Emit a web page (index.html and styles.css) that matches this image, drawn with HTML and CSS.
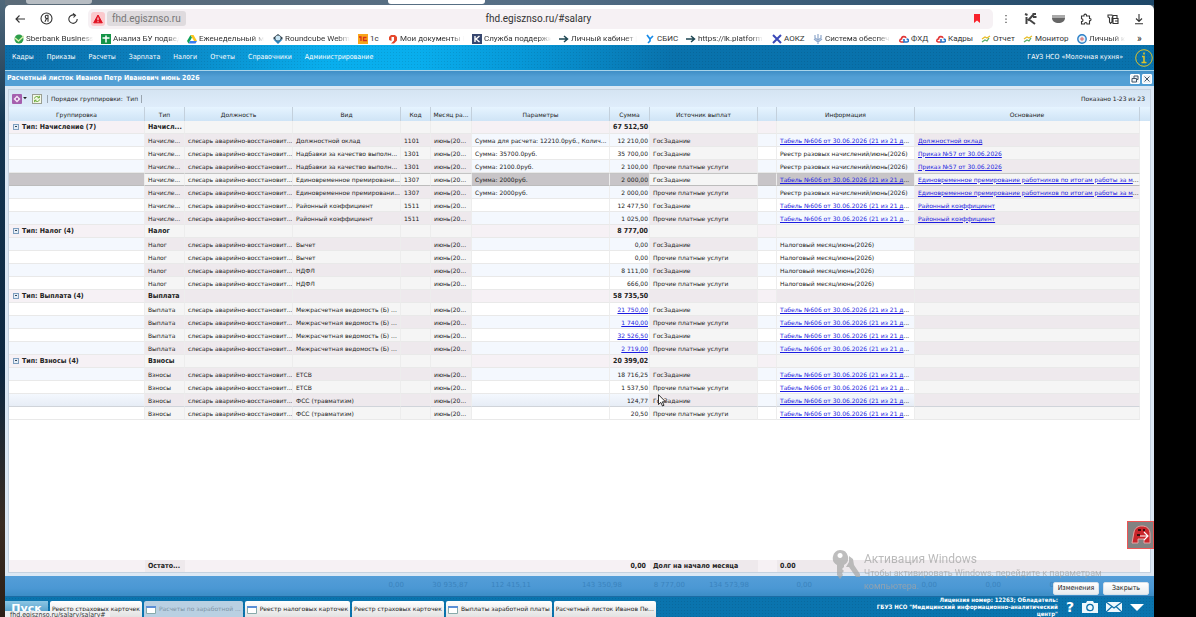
FILE: index.html
```html
<!DOCTYPE html>
<html lang="ru">
<head>
<meta charset="utf-8">
<title>Расчетный листок</title>
<link rel="stylesheet" href="styles.css">
</head>
<body>
<div class="tabs"><span class="tab tab-dim"></span><span class="tab tab-active"></span></div>
<div class="browser">
<header class="chrome">
<div class="address-row">
<button class="tool" aria-label="Назад"><svg width="12" height="12" viewBox="0 0 12 12"><path d="M11 6H2M5.500 2.500L2 6l3.500 3.500"/></svg></button>
<button class="tool" aria-label="Яндекс"><svg width="13" height="13" viewBox="0 0 13 13"><circle cx="6.500" cy="6.500" r="5.500"/><path d="M8 9.800V3.200H6.800C4.700 3.200 4.700 6.500 6.800 6.500H8M6.600 6.500L4.900 9.800"/></svg></button>
<button class="tool" aria-label="Обновить"><svg width="12" height="12" viewBox="0 0 12 12"><path d="M7.500 2.200A4.200 4.200 0 1 0 10.200 6M6 .5l2.500 1.800L6.500 4.500"/></svg></button>
<div class="address">
<span class="warn"><svg width="10" height="10" viewBox="0 0 10 10"><path d="M5 1L9.300 8.800H.7z" fill="#e01020" stroke="#e01020" stroke-linejoin="round"/><path d="M5 3.500v2.800M5 7.200v1" stroke="#fff"/></svg></span>
<span class="host">fhd.egisznso.ru</span>
<span class="url">fhd.egisznso.ru/#salary</span>
<svg class="mark" width="8" height="9" viewBox="0 0 8 9"><path d="M1 0h6v9L4 6.500 1 9z" fill="#f8232c"/></svg>
</div>
<div class="chrome-tools">
<button class="tool" aria-label="Меню"><svg width="6" height="12" viewBox="0 0 6 12"><path d="M3 2v1.300M3 5.400v1.300M3 8.800v1.300"/></svg></button>
<button class="tool" aria-label="Kaspersky"><svg width="13" height="13" viewBox="0 0 13 13"><path d="M2.500 5v7M4 8.500L10 2M5 7.500l6 4.500M9 5h3.500M1 2l2.500 1M8.500 2H12" stroke="#444" stroke-width="2"/></svg></button>
<button class="tool" aria-label="Защита"><svg width="13" height="10" viewBox="0 0 13 10"><path d="M0 1h13v3c0 3-3 5-6.500 5S0 7 0 4z" fill="#666" stroke="none"/><path d="M0 1h13v3H0z" fill="#aaa" stroke="none"/></svg></button>
<button class="tool" aria-label="Расширения"><svg width="12" height="12" viewBox="0 0 12 12"><path d="M1.500 3h2.500c-.5-2.500 3-2.500 2.500 0H9.500v2.500c2-.5 2 2.500 0 2.300V11H7c0-2-2.500-2-2.500 0h-3V8.500c2 0 2-2.700 0-2.700z"/></svg></button>
<button class="tool" aria-label="Пароли"><svg width="12" height="12" viewBox="0 0 12 12"><path d="M1 2h4l1 2-1 1v4l-1.500 1.500L2.500 9V5L1 4zM6 2.500h4V5M6 5.500h5v5H6zM8 8h3"/></svg></button>
<button class="tool" aria-label="Загрузки"><svg width="10" height="12" viewBox="0 0 10 12"><path d="M5 1v7M2 5.500l3 3 3-3M1 10.800h8"/></svg></button>
</div>
</div>
<nav class="bookmarks">
<a class="fade" href="#"><svg viewBox="0 0 10 10"><circle cx="5" cy="5" r="4.500" fill="#2e9e4a"/><path d="M1 4l3.500 3L10 2" stroke="#d6f0a8" stroke-width="1.500"/></svg><span>Sberbank Business</span></a>
<a class="fade" href="#"><svg viewBox="0 0 10 10"><path d="M0 0h10v10H0z" fill="#159447"/><path d="M5 1.500v7M1.500 4h7" stroke="#fff" stroke-width="1.500"/></svg><span>Анализ БУ подвед</span></a>
<a class="fade" href="#"><svg viewBox="0 0 10 10"><path d="M3.500 1L0 7l1.500 2.500L5 3.500z" fill="#10a25a"/><path d="M3.500 1h3L10 7H7z" fill="#fbc51d"/><path d="M10 7H3L1.500 9.500h7z" fill="#3a7df0"/></svg><span>Еженедельный м</span></a>
<a class="fade" href="#"><svg viewBox="0 0 10 10"><path d="M5 0l5 4-5 5-5-5z" fill="#31404c"/><circle cx="5" cy="4" r="2.600" fill="#c8e6f5"/><path d="M0 5l5 2 5-2-5 5z" fill="#2b80b8"/></svg><span>Roundcube Webm</span></a>
<a href="#"><svg viewBox="0 0 10 10"><path d="M0 0h10v10H0z" fill="#f9a51a"/><path d="M1 3h2v4M8.500 3.500H5.500v3H9" stroke="#d8301c" stroke-width="1.300"/></svg><span>1с</span></a>
<a class="fade" href="#"><svg viewBox="0 0 10 10"><path d="M3 1h4l2 2v3.500L6 9.500H3L6 6.500V3L3.500 3v4L1 6V3z" fill="#e5482c"/></svg><span>Мои документы Н</span></a>
<a class="fade" href="#"><svg viewBox="0 0 10 10"><path d="M0 0h10v10H0z" fill="#37476f"/><path d="M3 2v6M7.500 2L4 5l3.500 3" stroke="#fff" stroke-width="1.400"/></svg><span>Служба поддержк</span></a>
<a class="fade" href="#"><svg viewBox="0 0 10 10"><path d="M0 5h8M5 2l3.500 3L5 8" stroke="#1d4652" stroke-width="1.500"/></svg><span>Личный кабинет |</span></a>
<a href="#"><svg viewBox="0 0 10 10"><path d="M2 1l3 4M8 2L5 5v2L3 9" stroke="#178be8" stroke-width="1.700"/></svg><span>СБИС</span></a>
<a class="fade" href="#"><svg viewBox="0 0 10 10"><path d="M0 5h8M5 2l3.500 3L5 8" stroke="#1d4652" stroke-width="1.500"/></svg><span>https://lk.platform</span></a>
<a href="#"><svg viewBox="0 0 10 10"><path d="M1 1l8 8M9 1L1 9" stroke="#3a49b8" stroke-width="2"/></svg><span>АОКZ</span></a>
<a class="fade" href="#"><svg viewBox="0 0 10 10"><path d="M5 0v10M2 1v3l3 2 3-2V1M1 5l4 3 4-3" stroke="#8fa8cc" stroke-width="1.200"/></svg><span>Система обеспеч</span></a>
<a href="#"><svg viewBox="0 0 10 10"><path d="M5 8H2.500C0 8 .5 5 2.500 5c0-3 4-3 4.500-1" stroke="#e23636" stroke-width="1.600"/><path d="M5 5v3h3c2 0 2-3-.5-3" stroke="#2773c8" stroke-width="1.600"/></svg><span>ФХД</span></a>
<a href="#"><svg viewBox="0 0 10 10"><path d="M5 8H2.500C0 8 .5 5 2.500 5c0-3 4-3 4.500-1" stroke="#e23636" stroke-width="1.600"/><path d="M5 5v3h3c2 0 2-3-.5-3" stroke="#2773c8" stroke-width="1.600"/></svg><span>Кадры</span></a>
<a href="#"><svg viewBox="0 0 10 10"><path d="M1 5l3-2 2 1 3-2" stroke="#e8bc26" stroke-width="1.300"/><path d="M1 8l3-2 2 1 2-3" stroke="#5cad6b" stroke-width="1.300"/></svg><span>Отчет</span></a>
<a href="#"><svg viewBox="0 0 10 10"><path d="M1 5l3-2 2 1 3-2" stroke="#e8bc26" stroke-width="1.300"/><path d="M1 8l3-2 2 1 2-3" stroke="#5cad6b" stroke-width="1.300"/></svg><span>Монитор</span></a>
<a class="fade" href="#"><svg viewBox="0 0 10 10"><circle cx="5" cy="5" r="4.200" fill="#e6eef6" stroke="#2b80c8" stroke-width="1.400"/><path d="M3 5h4M5 3v4" stroke="#d66"/></svg><span>Личный к</span></a>
<button class="more" aria-label="Ещё закладки">»</button>
</nav>
</header>
<nav class="menu">
<a href="#">Кадры</a><a href="#">Приказы</a><a href="#">Расчеты</a><a href="#">Зарплата</a><a href="#">Налоги</a><a href="#">Отчеты</a><a href="#">Справочники</a><a href="#">Администрирование</a>
<span class="org">ГАУЗ НСО «Молочная кухня»</span>
<svg class="info" width="18" height="18" viewBox="0 0 18 18"><circle cx="9" cy="9" r="8.300"/><path d="M9 3.500v2M7 7.500h2v6M6.500 13.500h5" stroke-width="1.600"/></svg>
</nav>
<main class="window">
<div class="titlebar"><h1>Расчетный листок Иванов Петр Иванович июнь 2026</h1>
<button class="win" aria-label="Развернуть"><svg width="8" height="8" viewBox="0 0 8 8"><path d="M3 3V1h4v3.500H5.500M1 3.500h4.500V7H1z"/></svg></button>
<button class="win" aria-label="Закрыть окно"><svg width="8" height="8" viewBox="0 0 8 8"><path d="M1.500 1.500l5 5M6.500 1.500l-5 5"/></svg></button></div>
<section class="panel">
<div class="toolbar">
<button class="gear" aria-label="Настройки"><svg width="10" height="10" viewBox="0 0 10 10"><rect width="10" height="10" rx="1" fill="#a55fae"/><path d="M5 1.500L8.500 5 5 8.500 1.500 5z" fill="#f3e3f5"/><circle cx="5" cy="5" r="1.200" fill="#a55fae"/></svg><svg width="4" height="3" viewBox="0 0 5 4"><path d="M0 0h5L2.500 3z" fill="#222"/></svg></button>
<button class="refresh" aria-label="Обновить таблицу"><svg width="10" height="10" viewBox="0 0 10 10"><rect x=".5" y=".5" width="9" height="9" fill="#f3f8e8" stroke="#9a9f92"/><path d="M2.500 4.500C3 2 6 2 7 3.500M7.500 5.500C7 8 4 8 3 6.500M7.300 1.800v2H5.500M2.700 8.200v-2h1.800" fill="none" stroke="#5fa52a"/></svg></button>
<span class="group">Порядок группировки:&nbsp; Тип</span>
<span class="count">Показано 1-23 из 23</span>
</div>
<div class="grid">
<table>
<colgroup><col class="c-group"><col class="c-type"><col class="c-job"><col class="c-kind"><col class="c-code"><col class="c-month"><col class="c-params"><col class="c-sum"><col class="c-source"><col class="c-blank"><col class="c-info"><col></colgroup>
<thead><tr><th>Группировка</th><th>Тип</th><th>Должность</th><th>Вид</th><th>Код</th><th>Месяц ра...</th><th>Параметры</th><th>Сумма</th><th>Источник выплат</th><th></th><th>Информация</th><th>Основание</th></tr></thead>
<tbody>
<tr class="g"><td><button class="fold" aria-label="Свернуть"></button>Тип: Начисление (7)</td><td>Начисл...</td><td></td><td></td><td></td><td></td><td></td><td>67 512,50</td><td></td><td></td><td></td><td></td></tr>
<tr><td></td><td>Начисле...</td><td>слесарь аварийно-восстановит...</td><td>Должностной оклад</td><td>1101</td><td>июнь(20...</td><td>Сумма для расчета: 12210.0руб., Колич...</td><td>12 210,00</td><td>ГосЗадание</td><td></td><td><a href="#">Табель №606 от 30.06.2026 (21 из 21 д</a>...</td><td><a href="#">Должностной оклад</a></td></tr>
<tr><td></td><td>Начисле...</td><td>слесарь аварийно-восстановит...</td><td>Надбавки за качество выполн...</td><td>1301</td><td>июнь(20...</td><td>Сумма: 35700.0руб.</td><td>35 700,00</td><td>ГосЗадание</td><td></td><td>Реестр разовых начислений/июнь(2026)</td><td><a href="#">Приказ №57 от 30.06.2026</a></td></tr>
<tr><td></td><td>Начисле...</td><td>слесарь аварийно-восстановит...</td><td>Надбавки за качество выполн...</td><td>1301</td><td>июнь(20...</td><td>Сумма: 2100.0руб.</td><td>2 100,00</td><td>Прочие платные услуги</td><td></td><td>Реестр разовых начислений/июнь(2026)</td><td><a href="#">Приказ №57 от 30.06.2026</a></td></tr>
<tr class="selected"><td></td><td>Начисле...</td><td>слесарь аварийно-восстановит...</td><td>Единовременное премировани...</td><td>1307</td><td>июнь(20...</td><td>Сумма: 2000руб.</td><td>2 000,00</td><td>ГосЗадание</td><td></td><td><a href="#">Табель №606 от 30.06.2026 (21 из 21 д</a>...</td><td><a href="#">Единовременное премирование работников по итогам работы за м</a>...</td></tr>
<tr><td></td><td>Начисле...</td><td>слесарь аварийно-восстановит...</td><td>Единовременное премировани...</td><td>1307</td><td>июнь(20...</td><td>Сумма: 2000руб.</td><td>2 000,00</td><td>Прочие платные услуги</td><td></td><td>Реестр разовых начислений/июнь(2026)</td><td><a href="#">Единовременное премирование работников по итогам работы за м</a>...</td></tr>
<tr><td></td><td>Начисле...</td><td>слесарь аварийно-восстановит...</td><td>Районный коэффициент</td><td>1511</td><td>июнь(20...</td><td></td><td>12 477,50</td><td>ГосЗадание</td><td></td><td><a href="#">Табель №606 от 30.06.2026 (21 из 21 д</a>...</td><td><a href="#">Районный коэффициент</a></td></tr>
<tr><td></td><td>Начисле...</td><td>слесарь аварийно-восстановит...</td><td>Районный коэффициент</td><td>1511</td><td>июнь(20...</td><td></td><td>1 025,00</td><td>Прочие платные услуги</td><td></td><td><a href="#">Табель №606 от 30.06.2026 (21 из 21 д</a>...</td><td><a href="#">Районный коэффициент</a></td></tr>
<tr class="g"><td><button class="fold" aria-label="Свернуть"></button>Тип: Налог (4)</td><td>Налог</td><td></td><td></td><td></td><td></td><td></td><td>8 777,00</td><td></td><td></td><td></td><td></td></tr>
<tr><td></td><td>Налог</td><td>слесарь аварийно-восстановит...</td><td>Вычет</td><td></td><td>июнь(20...</td><td></td><td>0,00</td><td>ГосЗадание</td><td></td><td>Налоговый месяц/июнь(2026)</td><td></td></tr>
<tr><td></td><td>Налог</td><td>слесарь аварийно-восстановит...</td><td>Вычет</td><td></td><td>июнь(20...</td><td></td><td>0,00</td><td>Прочие платные услуги</td><td></td><td>Налоговый месяц/июнь(2026)</td><td></td></tr>
<tr><td></td><td>Налог</td><td>слесарь аварийно-восстановит...</td><td>НДФЛ</td><td></td><td>июнь(20...</td><td></td><td>8 111,00</td><td>ГосЗадание</td><td></td><td>Налоговый месяц/июнь(2026)</td><td></td></tr>
<tr><td></td><td>Налог</td><td>слесарь аварийно-восстановит...</td><td>НДФЛ</td><td></td><td>июнь(20...</td><td></td><td>666,00</td><td>Прочие платные услуги</td><td></td><td>Налоговый месяц/июнь(2026)</td><td></td></tr>
<tr class="g"><td><button class="fold" aria-label="Свернуть"></button>Тип: Выплата (4)</td><td>Выплата</td><td></td><td></td><td></td><td></td><td></td><td>58 735,50</td><td></td><td></td><td></td><td></td></tr>
<tr><td></td><td>Выплата</td><td>слесарь аварийно-восстановит...</td><td>Межрасчетная ведомость (Б) ...</td><td></td><td>июнь(20...</td><td></td><td><a href="#">21 750,00</a></td><td>ГосЗадание</td><td></td><td><a href="#">Табель №606 от 30.06.2026 (21 из 21 д</a>...</td><td></td></tr>
<tr><td></td><td>Выплата</td><td>слесарь аварийно-восстановит...</td><td>Межрасчетная ведомость (Б) ...</td><td></td><td>июнь(20...</td><td></td><td><a href="#">1 740,00</a></td><td>Прочие платные услуги</td><td></td><td><a href="#">Табель №606 от 30.06.2026 (21 из 21 д</a>...</td><td></td></tr>
<tr><td></td><td>Выплата</td><td>слесарь аварийно-восстановит...</td><td>Межрасчетная ведомость (Б) ...</td><td></td><td>июнь(20...</td><td></td><td><a href="#">32 526,50</a></td><td>ГосЗадание</td><td></td><td><a href="#">Табель №606 от 30.06.2026 (21 из 21 д</a>...</td><td></td></tr>
<tr><td></td><td>Выплата</td><td>слесарь аварийно-восстановит...</td><td>Межрасчетная ведомость (Б) ...</td><td></td><td>июнь(20...</td><td></td><td><a href="#">2 719,00</a></td><td>Прочие платные услуги</td><td></td><td><a href="#">Табель №606 от 30.06.2026 (21 из 21 д</a>...</td><td></td></tr>
<tr class="g"><td><button class="fold" aria-label="Свернуть"></button>Тип: Взносы (4)</td><td>Взносы</td><td></td><td></td><td></td><td></td><td></td><td>20 399,02</td><td></td><td></td><td></td><td></td></tr>
<tr><td></td><td>Взносы</td><td>слесарь аварийно-восстановит...</td><td>ЕТСВ</td><td></td><td>июнь(20...</td><td></td><td>18 716,25</td><td>ГосЗадание</td><td></td><td><a href="#">Табель №606 от 30.06.2026 (21 из 21 д</a>...</td><td></td></tr>
<tr><td></td><td>Взносы</td><td>слесарь аварийно-восстановит...</td><td>ЕТСВ</td><td></td><td>июнь(20...</td><td></td><td>1 537,50</td><td>Прочие платные услуги</td><td></td><td><a href="#">Табель №606 от 30.06.2026 (21 из 21 д</a>...</td><td></td></tr>
<tr class="hover"><td></td><td>Взносы</td><td>слесарь аварийно-восстановит...</td><td>ФСС (травматизм)</td><td></td><td>июнь(20...</td><td></td><td>124,77</td><td>ГосЗадание</td><td></td><td><a href="#">Табель №606 от 30.06.2026 (21 из 21 д</a>...</td><td></td></tr>
<tr><td></td><td>Взносы</td><td>слесарь аварийно-восстановит...</td><td>ФСС (травматизм)</td><td></td><td>июнь(20...</td><td></td><td>20,50</td><td>Прочие платные услуги</td><td></td><td><a href="#">Табель №606 от 30.06.2026 (21 из 21 д</a>...</td><td></td></tr>
</tbody>
</table>
</div>
<div class="summary">
<table>
<colgroup><col class="c-group"><col class="c-type"><col class="c-job"><col class="c-kind"><col class="c-code"><col class="c-month"><col class="c-params"><col class="c-sum"><col class="c-source"><col class="c-blank"><col class="c-info"><col></colgroup>
<tbody><tr><td></td><td>Остато...</td><td></td><td></td><td></td><td></td><td></td><td>0,00</td><td>Долг на начало месяца</td><td></td><td>0.00</td><td></td></tr></tbody>
</table>
</div>
</section>
<footer class="actions">
<div class="ghost"><span>0,00</span><span>30 935,87</span><span>112 415,11</span><span>143 350,98</span><span>8 777,00</span><span>134 573,98</span><span>0,00</span><span>0,00</span><span>0,00</span><span>0,00</span></div>
<button class="btn">Изменения</button><button class="btn">Закрыть</button>
</footer>
</main>
<footer class="taskbar">
<button class="start">Пуск</button>
<button class="task">Реестр страховых карточек</button>
<button class="task task-off"><svg width="10" height="8" viewBox="0 0 10 8"><path d="M.5.5h9v7h-9z"/><path d="M0 0h10v2H0z" class="cap"/></svg><span>Расчеты по заработной ...</span></button>
<button class="task"><svg width="10" height="8" viewBox="0 0 10 8"><path d="M.5.5h9v7h-9z"/><path d="M0 0h10v2H0z" class="cap"/></svg><span>Реестр налоговых карточек</span></button>
<button class="task">Реестр страховых карточек</button>
<button class="task"><svg width="10" height="8" viewBox="0 0 10 8"><path d="M.5.5h9v7h-9z"/><path d="M0 0h10v2H0z" class="cap"/></svg><span>Выплаты заработной платы</span></button>
<button class="task">Расчетный листок Иванов Пе...</button>
<p class="license">Лицензия номер: 12263; Обладатель:<br>ГБУЗ НСО "Медицинский информационно-аналитический<br>центр"</p>
<div class="tray">
<button aria-label="Справка">?</button>
<button aria-label="Снимок"><svg width="16" height="12" viewBox="0 0 16 12"><path d="M0 2h4l1-2h6l1 2h4v10H0z" fill="#eef7fc"/><circle cx="8" cy="6.500" r="3.200" fill="none" stroke="#0b6ea8" stroke-width="1.300"/></svg></button>
<button aria-label="Почта"><svg width="16" height="12" viewBox="0 0 16 12"><path d="M0 1h16v10H0z" fill="#eef7fc"/><path d="M0 1l8 6 8-6M0 11l6-5.500M16 11l-6-5.500" fill="none" stroke="#0b6ea8" stroke-width="1.200"/></svg></button>
<button aria-label="Свернуть всё"><svg width="14" height="7" viewBox="0 0 14 7"><path d="M0 0h14L7 7z" fill="#fff"/></svg></button>
</div>
</footer>
<div class="watermark">
<svg width="29" height="30" viewBox="0 0 29 30"><path d="M8 0a8 8 0 0 1 4 15v2l-2 2 2 2-2 2 1 2-3 4-3-4V15A8 8 0 0 1 8 0zM8 3a2.500 2.500 0 1 0 .1 0z" fill="#a9a9a9" fill-rule="evenodd"/><path d="M17 6l4 3 1 6 6 9v3h-4l-7-10h-3l3-5z" fill="#a9a9a9"/></svg>
<div><strong>Активация Windows</strong><p>Чтобы активировать Windows, перейдите к параметрам<br>компьютера.</p></div>
</div>
<div class="pdf"><svg width="22" height="20" viewBox="0 0 22 20"><path d="M2 18L4 7C5 3 8 1 12 1c5 0 8 3 8 8v9h-6v-4H8v4z" fill="#c9252b" stroke="#e9a3a3" stroke-width="1"/><path d="M8 5h3M13 5h2M7 10h3" stroke="#3a1010" stroke-width="2"/><path d="M10 11h8M14 7l4 4-4 4" fill="none" stroke="#fff" stroke-width="1.200"/></svg></div>
<div class="status">fhd.egisznso.ru/salary/salary#</div>
</div>
<svg class="cursor" width="9" height="13" viewBox="0 0 9 13"><path d="M.5.7v9.800l2.300-2.100 1.700 3.600 1.500-.7-1.600-3.500h3.100z" fill="#fff" stroke="#000" stroke-width=".8"/></svg>
</body>
</html>
```
FILE: styles.css
```css
*{box-sizing:border-box}
body{margin:0;height:100vh;overflow:hidden;position:relative;display:flex;flex-direction:column;padding:0 42px 0 5px;
  background:linear-gradient(#000,#000) right/42px 100% no-repeat,linear-gradient(#50687a,#143652 20%,#0c2740 60%,#3a2c22 85%,#2c1f17);
  font:6px/11px "DejaVu Sans",sans-serif;color:#222}
button{font:inherit;color:inherit;border:0;padding:0;background:none}
p,h1{margin:0}
svg{flex:none}

.tabs{flex:none;height:5px;display:flex;gap:296px;padding-left:21px;background:linear-gradient(90deg,#5b6b78,#566f86 45%,#1d4768)}
.tab{height:4px;border-radius:0 0 3px 3px}
.tab-dim{width:66px;background:#b7bdc3}
.tab-active{width:97px;background:#fff}

.browser{flex:1;min-height:0;display:flex;flex-direction:column;position:relative}
.chrome{flex:none;background:#fff;border-radius:5px 5px 0 0}
.address-row{display:flex;align-items:center;height:27px;padding:2px 10px 2px 9px;gap:14px}
.tool{display:flex}
.tool svg{fill:none;stroke:#333;stroke-width:1.1}
.address{flex:1;display:flex;align-items:center;gap:2px;height:20px;margin:0 -4px 0 -5px;padding:0 12px 0 3px;border-radius:5px;background:#f6f1f4}
.warn{display:flex;padding:2px;background:#fbc9cd;border-radius:3px}
.host{padding:1px 5px;background:#dfdbde;border-radius:3px;color:#777;font:10px/13px Roboto,sans-serif}
.url{flex:1;padding-right:82px;text-align:center;font:10px/13px Roboto,sans-serif;color:#333}
.chrome-tools{display:flex;align-items:center;gap:15px}
.bookmarks{display:grid;grid-template-columns:87px 86px 86px 85px 30px 84px 87px 86px 41px 86px 41px 86px 37px 45px 42px 54px 60px 1fr;align-items:center;height:13px;padding-left:9px}
.bookmarks a{display:flex;align-items:center;gap:2px;min-width:0;color:#333;text-decoration:none;font:8px/12px Roboto,sans-serif;white-space:nowrap}
.bookmarks .fade{padding-right:8px}
.bookmarks .fade span{overflow:hidden;mask-image:linear-gradient(90deg,#000 calc(100% - 12px),transparent)}
.bookmarks svg{width:10px;height:10px;fill:none}
.more{font:10px/12px Roboto,sans-serif;text-align:left}

.menu{flex:none;display:flex;align-items:center;gap:13px;height:26px;padding:0 1px 0 7px;border-bottom:1px solid #a8d4ea;
  background:radial-gradient(circle,#00000018 1px,transparent 1px) 0 0/3px 3px,linear-gradient(100deg,#0b6fab,#0b7fbc 12%,#09aeed 28%,#09aeed 36%,#0798d8 45%,#0972ac 58%)}
.menu a{color:#fff;text-decoration:none;font:7px/11px "DejaVu Sans Condensed","DejaVu Sans",sans-serif}
.org{margin-left:auto;color:#fff;font:7px/11px "DejaVu Sans Condensed","DejaVu Sans",sans-serif}
.info{fill:none;stroke:#dcc22c;margin-left:-1px}

.window{flex:1;min-height:0;display:flex;flex-direction:column;background:#dce8f4}
.titlebar{flex:none;display:flex;align-items:center;gap:2px;height:15px;padding:0 2px;background:linear-gradient(#3f8ec6,#529fd5 40%)}
.titlebar h1{flex:1;color:#fff;font:bold 7px/11px "DejaVu Sans Condensed","DejaVu Sans",sans-serif}
.win{display:flex;border:1px solid #fff;border-radius:1px;background:#eef3f7}
.win svg{fill:none;stroke:#456}
.panel{flex:1;min-height:0;display:flex;flex-direction:column;margin:3px;border:1px solid #c5d2e0;background:#fff}
.toolbar{flex:none;display:flex;align-items:center;gap:7px;height:17px;padding:0 5px 0 3px;background:linear-gradient(#d5e4f2,#dfedfb)}
.gear{display:flex;align-items:center;gap:1px;margin-right:-2px}
.refresh{display:flex;margin-right:-2px}
.group{border:solid #9aa5af;border-width:0 1px;padding:0 3px;line-height:8px}
.count{margin-left:auto}
.grid{flex:1;min-height:0;overflow:hidden;background:linear-gradient(#e6f4ff,#cfe4f6) 0 0/100% 14px no-repeat}
table{width:calc(100% - 10px);border-collapse:separate;border-spacing:0;table-layout:fixed}
.c-group{width:136px}.c-type{width:40px}.c-job{width:108px}.c-kind{width:108px}.c-code{width:30px}.c-month{width:41px}.c-params{width:138px}.c-sum{width:40px}.c-source{width:108px}.c-blank{width:19px}.c-info{width:138px}
th,td{height:13px;padding:0 0 0 3px;overflow:hidden;white-space:nowrap;line-height:11px}
th{height:14px;padding:0;border-right:1px solid #c3d0dc;font-weight:400;text-align:center}
td{border-right:1px solid #ededed;border-bottom:1px solid #e9e9e9;background:#f5f5f5}
td:nth-child(1),td:nth-child(7),td:nth-child(8),td:nth-child(10),td:nth-child(11){background:#fff}
td:nth-child(8){text-align:right;padding-right:1px}
tr:nth-child(even) td{background:#eee9ed}
tr:nth-child(even) td:nth-child(1),tr:nth-child(even) td:nth-child(7),tr:nth-child(even) td:nth-child(8),tr:nth-child(even) td:nth-child(10),tr:nth-child(even) td:nth-child(11){background:#f4f8fe}
.g td{font:bold 7px/11px "DejaVu Sans Condensed","DejaVu Sans",sans-serif}
.grid .g td:nth-child(1){padding-left:4px}
.grid .g td:nth-child(11){background:#f5f5f5}
.grid .g:nth-child(even) td:nth-child(11){background:#eee9ed}
.grid .g td:nth-child(1),.grid .g td:nth-child(7),.grid .g td:nth-child(8),.grid .g td:nth-child(10){background:#f6f1f5}
.fold{width:6px;height:6px;margin:0 3px 0 0;border:1px solid #7f9fbf;background:linear-gradient(#345,#345) center/2px 1px no-repeat,#e4edf6}
td a{color:#1c1ce0}
.selected td{border-bottom-color:#bcbcbc;border-top:1px solid #c4c4c4;line-height:10px}
.selected td:nth-child(1),.selected td:nth-child(7),.selected td:nth-child(8),.selected td:nth-child(10),.selected td:nth-child(11){background:#c8c5c8}
.hover td{border-bottom-color:#d0d4da}
tr.hover:nth-child(even) td:nth-child(1),tr.hover:nth-child(even) td:nth-child(7),tr.hover:nth-child(even) td:nth-child(8),tr.hover:nth-child(even) td:nth-child(11){background:linear-gradient(#f4f8fe,#e7edf6)}
.summary{flex:none}
.summary td{height:12px;border:0;background:#f6f1f4;font:bold 7px/11px "DejaVu Sans Condensed","DejaVu Sans",sans-serif}
.summary td:nth-child(8){padding-right:4px}
.summary td:nth-child(2),.summary td:nth-child(9),.summary td:nth-child(11),.summary td:nth-child(12){background:#eee9ec}
.summary td:nth-child(1),.summary td:nth-child(7),.summary td:nth-child(8),.summary td:nth-child(10){background:#f6f1f4}

.actions{flex:none;display:flex;align-items:center;gap:4px;height:21px;padding:4px 5px 0 0;background:linear-gradient(#549ed8,#4b98d4 60%,#3b8dc6);border-bottom:1px solid #1b6ba4}
.ghost{flex:1;display:grid;grid-template-columns:399px 64px 63px 91px 63px 64px 63px 125px 64px 64px;padding-bottom:5px;font:7px/11px "DejaVu Sans",sans-serif;color:#3a83bd;text-align:right;width:0;white-space:nowrap}
.btn{width:46px;height:13px;border:1px solid #d8e2ea;border-radius:2px;background:linear-gradient(#fff,#e8ecef);font:7px/11px "DejaVu Sans Condensed","DejaVu Sans",sans-serif}

.taskbar{flex:none;display:flex;align-items:flex-end;gap:2px;height:20px;background:radial-gradient(circle,#00000018 1px,transparent 1px) 0 0/3px 3px,#0a74ae;overflow:hidden}
.start{width:43px;height:16px;background:linear-gradient(#8cc6e4,#3b8fc0);color:#fff;font:bold 11px/16px "DejaVu Sans",sans-serif}
.task{display:flex;align-items:flex-start;justify-content:center;gap:3px;height:16px;padding:2px 2px 0;border-radius:2px 2px 0 0;background:linear-gradient(#fff,#e2e2e2);white-space:nowrap;line-height:12px}
.task svg{margin-top:3px;fill:#fff;stroke:#8aa}
.task .cap{fill:#5b8fd6;stroke:none}
.task-off{background:#b9d0e2;color:#7d93a5}
.license{flex:1;color:#fff;text-align:right;white-space:nowrap;font:bold 6px/7px "DejaVu Sans Condensed","DejaVu Sans",sans-serif}
.tray{display:flex;align-items:center;gap:8px;height:20px;padding:0 10px 0 6px;color:#fff;font:bold 14px/16px "DejaVu Sans",sans-serif}
.tray button{display:flex}

.watermark{position:absolute;left:827px;top:545px;display:flex;gap:3px;color:#a5a5a5;font:9px/13px Roboto,sans-serif;white-space:nowrap;opacity:.75}
.watermark strong{display:block;padding-top:2px;font:12px/15px Roboto,sans-serif}
.pdf{position:absolute;right:0;top:516px;width:27px;height:28px;display:flex;align-items:center;justify-content:center;border:1px solid #e55;background:#828282}
.status{position:absolute;left:0;bottom:0;height:6px;overflow:hidden;padding:0 4px 0 5px;border-radius:0 3px 0 0;background:#eef0f2;color:#333;font:7px/8px "DejaVu Sans Condensed",sans-serif}
.cursor{position:absolute;left:658px;top:394px}
```
